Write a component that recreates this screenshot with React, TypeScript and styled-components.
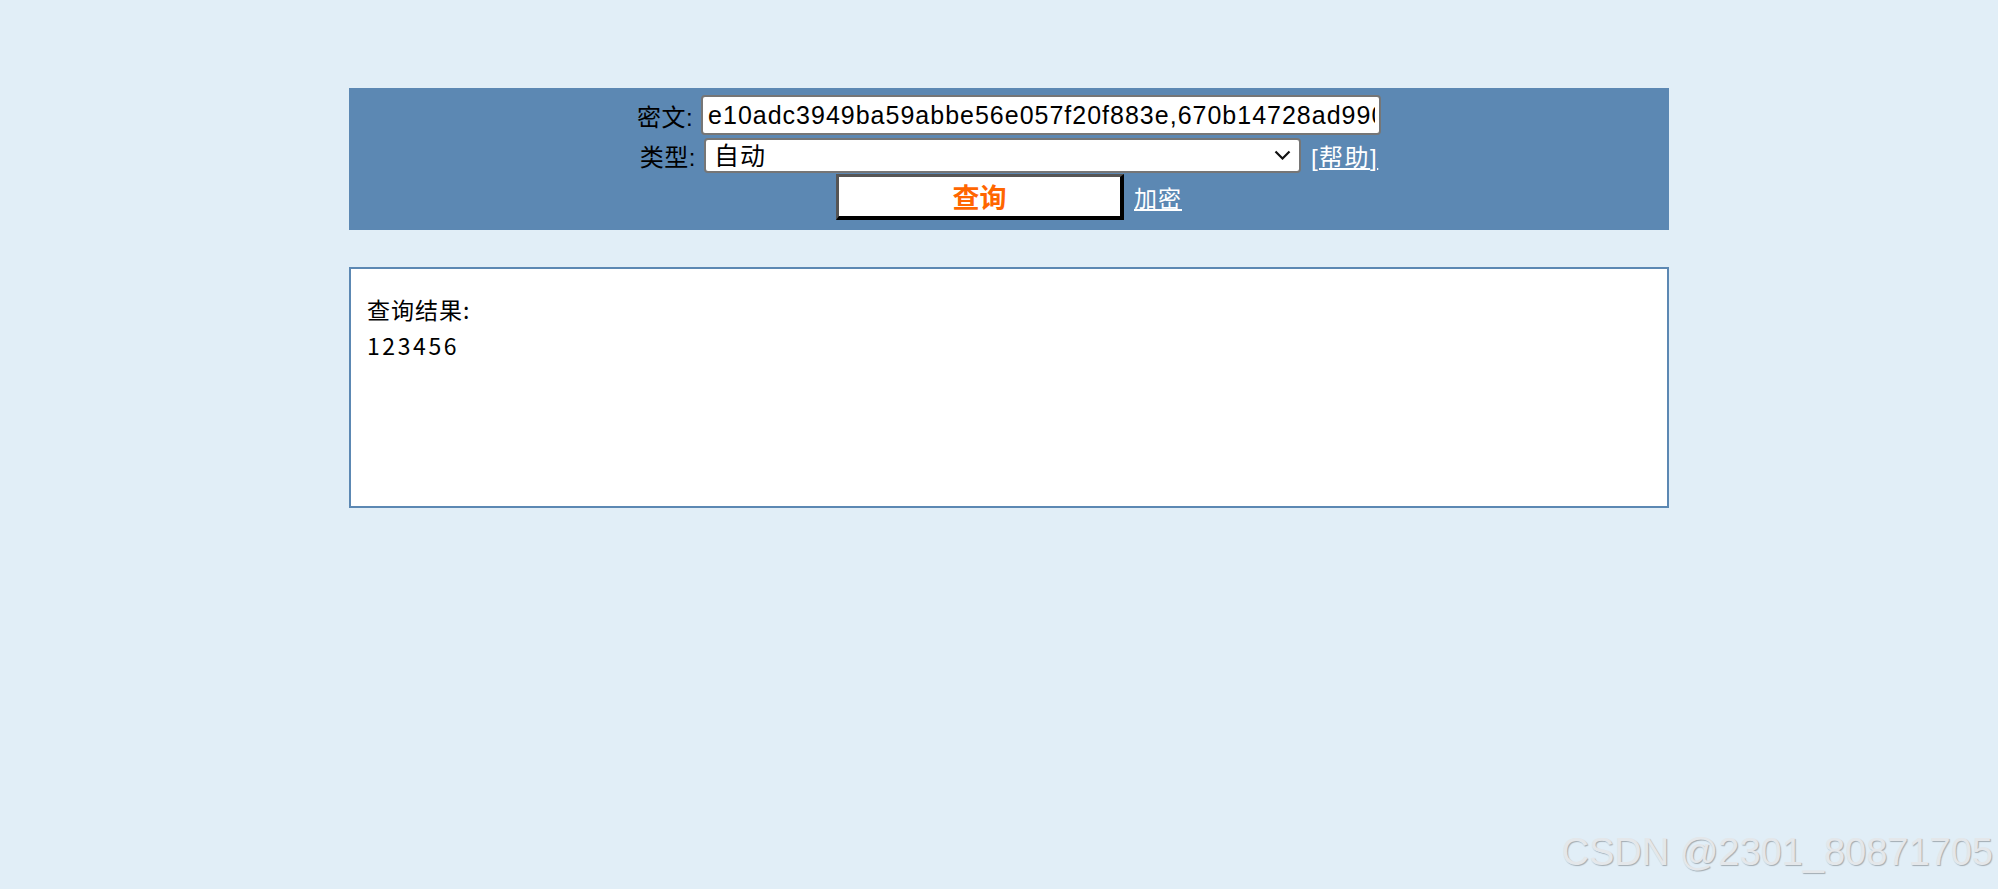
import React from "react";
import styled, { createGlobalStyle } from "styled-components";

const GlobalStyle = createGlobalStyle`
  html, body {
    margin: 0;
    padding: 0;
    background: #e1eef7;
  }
  body {
    height: 889px;
    overflow: hidden;
    font-family: "Liberation Sans", "Noto Sans CJK SC", sans-serif;
    position: relative;
  }
`;

const Main = styled.main`
  width: 1320px;
  margin: 88px 0 0 349px;
  display: flex;
  flex-direction: column;
  gap: 37px;
`;

const QueryPanel = styled.form`
  background: #5c88b3;
  box-sizing: border-box;
  height: 142px;
  padding: 7px 0 10px;
  display: flex;
  flex-direction: column;
  align-items: center;
`;

const Row = styled.div<{ $top?: number }>`
  display: flex;
  align-items: center;
  justify-content: center;
  margin-top: ${(p) => p.$top ?? 0}px;
  gap: 8px;
`;

const Label = styled.label`
  font-family: "Liberation Sans", "Noto Sans CJK SC", sans-serif;
  font-size: 24px;
  color: #000;
  letter-spacing: 0.5px;
`;

const CipherInput = styled.input`
  box-sizing: border-box;
  width: 680px;
  height: 40px;
  border: 2px solid #767676;
  border-radius: 4px;
  background: #fff;
  padding: 0 4px 0 5px;
  font-family: "Liberation Sans", Arial, sans-serif;
  font-size: 25px;
  letter-spacing: 1px;
  color: #000;
  outline: none;
`;

const SelectWrap = styled.div`
  position: relative;
  width: 597px;
  height: 35px;
  flex-shrink: 0;
`;

const TypeSelect = styled.select`
  box-sizing: border-box;
  width: 100%;
  height: 100%;
  appearance: none;
  -webkit-appearance: none;
  border: 2px solid #767676;
  border-radius: 4px;
  background: #fff;
  padding: 0 30px 3px 8px;
  font-family: "Noto Sans CJK SC", sans-serif;
  font-size: 25px;
  line-height: 1;
  letter-spacing: 1px;
  color: #000;
  outline: none;
`;

const Chevron = styled.svg`
  position: absolute;
  right: 10px;
  top: 12px;
  width: 17px;
  height: 10px;
  pointer-events: none;
`;

const HelpLink = styled.a`
  font-family: "Liberation Sans", "Noto Sans CJK SC", sans-serif;
  font-size: 24px;
  color: #fff;
  letter-spacing: 1.5px;
  margin-left: 2px;
  span {
    text-decoration: underline;
  }
`;

const QueryButton = styled.button`
  box-sizing: border-box;
  width: 288px;
  height: 46px;
  background: #fff;
  border-style: solid;
  border-width: 3px 4px 4px 3px;
  border-color: #555 #000 #000 #555;
  font-family: "Noto Sans CJK SC", sans-serif;
  font-size: 27px;
  font-weight: 700;
  color: #ff6600;
  padding: 0;
  line-height: 1;
  cursor: pointer;
`;

const TextLink = styled.a`
  font-family: "Noto Sans CJK SC", sans-serif;
  font-size: 23px;
  color: #fff;
  text-decoration: underline;
  letter-spacing: 1px;
  margin-left: 2px;
`;

const ResultBox = styled.section`
  box-sizing: border-box;
  height: 241px;
  background: #fff;
  border: 2px solid #5c88b3;
  padding: 22px 16px;
  font-family: "Noto Sans CJK SC", sans-serif;
  font-size: 23px;
  line-height: 36px;
  letter-spacing: 1px;
  color: #000;
`;

const ResultLine = styled.div<{ $wide?: boolean }>`
  letter-spacing: ${(p) => (p.$wide ? "2.6px" : "1px")};
`;

const Watermark = styled.div`
  position: absolute;
  right: 5px;
  bottom: 18px;
  font-family: "Liberation Sans", Arial, sans-serif;
  font-size: 38px;
  line-height: 1;
  color: #e4e7ea;
  text-shadow: 1px 1px 1px rgba(0, 0, 0, 0.28);
  pointer-events: none;
`;

export default function App() {
  return (
    <>
      <GlobalStyle />
      <Main>
        <QueryPanel onSubmit={(e) => e.preventDefault()}>
          <Row>
            <Label htmlFor="ciphertext">密文:</Label>
            <CipherInput
              id="ciphertext"
              type="text"
              defaultValue="e10adc3949ba59abbe56e057f20f883e,670b14728ad9902aecba32e22fa4f6bd"
            />
          </Row>
          <Row $top={3}>
            <Label htmlFor="hashtype">类型:</Label>
            <SelectWrap>
              <TypeSelect id="hashtype" defaultValue="auto">
                <option value="auto">自动</option>
                <option value="md5">md5</option>
                <option value="sha1">sha1</option>
              </TypeSelect>
              <Chevron viewBox="0 0 17 10">
                <path d="M1.5 1.5 L8.5 8.5 L15.5 1.5" fill="none" stroke="#111" strokeWidth="2.2" />
              </Chevron>
            </SelectWrap>
            <HelpLink href="#">
              [<span>帮助</span>]
            </HelpLink>
          </Row>
          <Row $top={1}>
            <QueryButton type="submit">查询</QueryButton>
            <TextLink href="#">加密</TextLink>
          </Row>
        </QueryPanel>
        <ResultBox>
          <ResultLine>查询结果:</ResultLine>
          <ResultLine $wide>123456</ResultLine>
        </ResultBox>
      </Main>
      <Watermark>CSDN @2301_80871705</Watermark>
    </>
  );
}
